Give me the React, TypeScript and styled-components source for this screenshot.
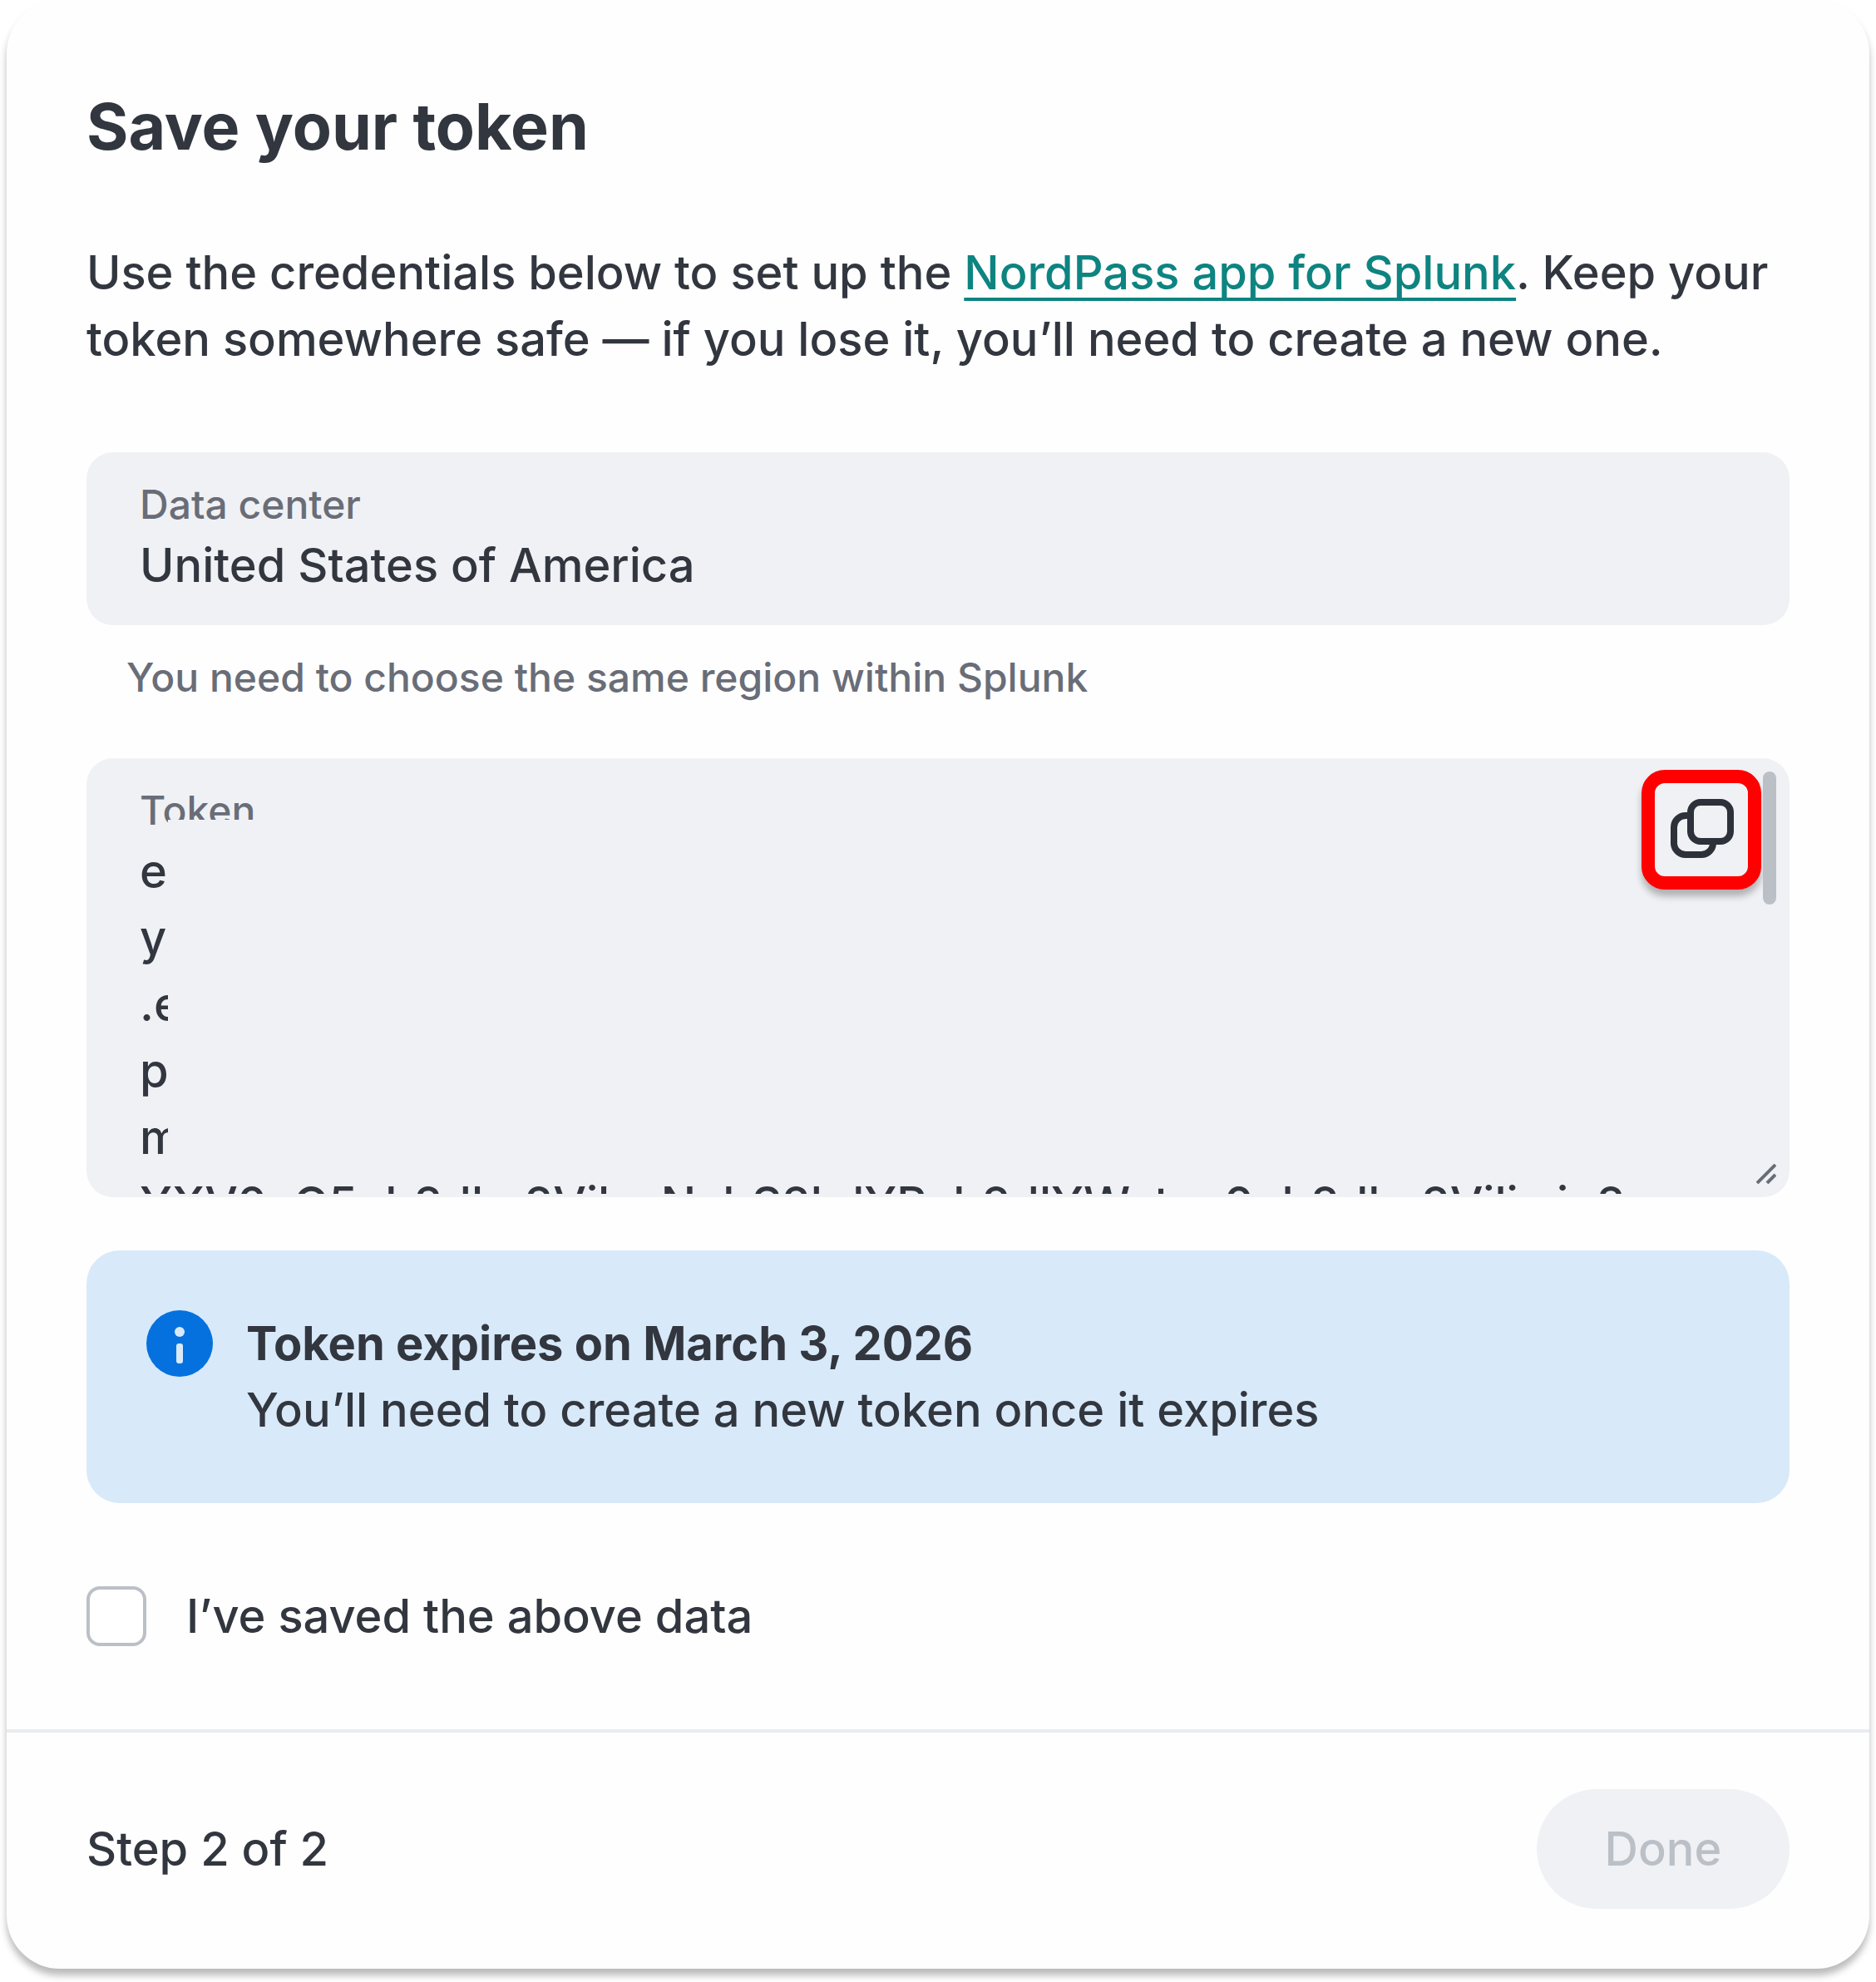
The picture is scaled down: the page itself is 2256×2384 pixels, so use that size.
import React, { useId, useState } from "react";
import styled, { createGlobalStyle } from "styled-components";

const color = {
  ink: "#32363f",
  muted: "#696d77",
  field: "#f0f1f5",
  outline: "#bbc0c7",
  line: "#e9ecef",
  link: "#0e8481",
  info: "#0471df",
  infoTint: "#d8e9f9",
  mark: "#ff0000",
};

const GlobalStyle = createGlobalStyle`
  *, *::before, *::after { box-sizing: border-box; }
  body {
    margin: 0;
    background: #ffffff;
    color: ${color.ink};
    font-family: Inter, "Liberation Sans", sans-serif;
    font-size: 56px;
    font-weight: 500;
    line-height: 80px;
  }
`;

const Page = styled.div`
  padding: 0 8px 16px;
`;

const Card = styled.main`
  background: #fefefe;
  border-radius: 64px;
  box-shadow: 0 8px 8px rgba(0, 0, 0, 0.27);
`;

const Content = styled.div`
  display: flex;
  flex-direction: column;
  padding: 96px;
`;

const Title = styled.h1`
  margin: 0 0 80px;
  font-size: 77px;
  line-height: 112px;
  font-weight: 700;
`;

const Lead = styled.p`
  margin: 0 0 96px;
`;

const Link = styled.a`
  color: ${color.link};
  text-decoration: underline;
  text-decoration-thickness: 4px;
  text-decoration-skip-ink: none;
  text-underline-offset: 10px;
`;

const Field = styled.div<{ $tall?: boolean }>`
  position: relative;
  display: flex;
  flex-direction: column;
  gap: 2px;
  padding: ${(p) => (p.$tall ? "32px 64px 4px" : "32px 64px")};
  border-radius: 32px;
  background: ${color.field};
`;

const FieldLabel = styled.label`
  color: ${color.muted};
  font-size: 48px;
  line-height: 62px;
`;

const FieldInput = styled.input`
  width: 100%;
  height: 80px;
  padding: 0;
  border: 0;
  outline: 0;
  background: transparent;
  color: inherit;
  font: inherit;
`;

const Hint = styled.p`
  margin: 32px 48px 66px;
  color: ${color.muted};
  font-size: 48px;
  line-height: 62px;
`;

const TokenArea = styled.textarea`
  display: block;
  width: 100%;
  height: 428px;
  padding: 0;
  border: 0;
  outline: 0;
  resize: none;
  overflow: hidden;
  white-space: pre;
  background: transparent;
  color: inherit;
  font: inherit;
`;

const Redaction = styled.span`
  position: absolute;
  top: 74px;
  right: 160px;
  bottom: 24px;
  left: 98px;
  background: ${color.field};
`;

const CopyButton = styled.button`
  position: absolute;
  top: 14px;
  right: 34px;
  display: grid;
  place-items: center;
  width: 144px;
  height: 144px;
  padding: 0;
  border: 16px solid ${color.mark};
  border-radius: 28px;
  background: ${color.field};
  box-shadow: 0 8px 8px rgba(0, 0, 0, 0.27);
  color: #2d313a;
`;

const ScrollThumb = styled.span`
  position: absolute;
  top: 16px;
  right: 16px;
  width: 16px;
  height: 160px;
  border-radius: 8px;
  background: ${color.outline};
`;

const Grip = styled.svg`
  position: absolute;
  right: 16px;
  bottom: 16px;
`;

const Notice = styled.section`
  display: flex;
  gap: 40px;
  margin: 64px 0 96px;
  padding: 72px;
  border-radius: 40px;
  background: ${color.infoTint};
`;

const NoticeIcon = styled.svg`
  flex: none;
`;

const NoticeTitle = styled.strong`
  display: block;
  font-weight: 700;
`;

const CheckRow = styled.label`
  display: flex;
  align-items: center;
  gap: 48px;
`;

const Checkbox = styled.input`
  appearance: none;
  width: 72px;
  height: 72px;
  margin: 0;
  border: 4px solid ${color.outline};
  border-radius: 16px;
  background: #ffffff;

  &:checked {
    border-color: ${color.link};
    background: ${color.link};
  }
`;

const Footer = styled.footer`
  display: flex;
  align-items: center;
  justify-content: space-between;
  padding: 68px 96px 72px;
  border-top: 4px solid ${color.line};
`;

const DoneButton = styled.button`
  min-width: 304px;
  height: 144px;
  padding: 0 80px;
  border: 0;
  border-radius: 72px;
  background: ${color.link};
  color: #ffffff;
  font: inherit;

  &:disabled {
    background: ${color.field};
    color: ${color.outline};
  }
`;

const tokenLines = ["e", "y", ".e", "p", "m", "YXV0aG5ub2dlm2VilzsNcbS2kdYRcb2dlYWatec0ub2dlm2Viliwin2"];

const CopyIcon = () => (
  <svg width="80" height="80" viewBox="0 0 80 80" fill="none" stroke="currentColor" strokeWidth="8" aria-hidden="true">
    <rect x="27" y="7" width="48" height="47" rx="12" />
    <path d="M27 23H21a14 14 0 0 0-14 14V56a14 14 0 0 0 14 14H40a14 14 0 0 0 14-14V54" />
  </svg>
);

export default function App() {
  const id = useId();
  const [saved, setSaved] = useState(false);

  return (
    <>
      <GlobalStyle />
      <Page>
        <Card>
          <Content>
            <Title>Save your token</Title>
            <Lead>
              Use the credentials below to set up the <Link href="#splunk">NordPass app for Splunk</Link>. Keep your
              token somewhere safe — if you lose it, you’ll need to create a new one.
            </Lead>

            <Field>
              <FieldLabel htmlFor={`${id}-region`}>Data center</FieldLabel>
              <FieldInput id={`${id}-region`} readOnly value="United States of America" />
            </Field>
            <Hint>You need to choose the same region within Splunk</Hint>

            <Field $tall>
              <FieldLabel htmlFor={`${id}-token`}>Token</FieldLabel>
              <TokenArea id={`${id}-token`} readOnly value={tokenLines.join("\n")} />
              <Redaction aria-hidden="true" />
              <CopyButton type="button" aria-label="Copy token">
                <CopyIcon />
              </CopyButton>
              <ScrollThumb aria-hidden="true" />
              <Grip width="24" height="24" viewBox="0 0 24 24" fill="none" stroke={color.muted} strokeWidth="4" aria-hidden="true">
                <path d="M1 23L23 1M13 23L23 13" />
              </Grip>
            </Field>

            <Notice>
              <NoticeIcon width="80" height="80" viewBox="0 0 80 80" aria-hidden="true">
                <circle cx="40" cy="40" r="40" fill={color.info} />
                <circle cx="40" cy="26" r="6" fill={color.infoTint} />
                <rect x="36" y="40" width="8" height="24" rx="3" fill={color.infoTint} />
              </NoticeIcon>
              <div>
                <NoticeTitle>Token expires on March 3, 2026</NoticeTitle>
                You’ll need to create a new token once it expires
              </div>
            </Notice>

            <CheckRow>
              <Checkbox type="checkbox" checked={saved} onChange={(e) => setSaved(e.target.checked)} />
              I’ve saved the above data
            </CheckRow>
          </Content>

          <Footer>
            <span>Step 2 of 2</span>
            <DoneButton type="button" disabled={!saved}>
              Done
            </DoneButton>
          </Footer>
        </Card>
      </Page>
    </>
  );
}
